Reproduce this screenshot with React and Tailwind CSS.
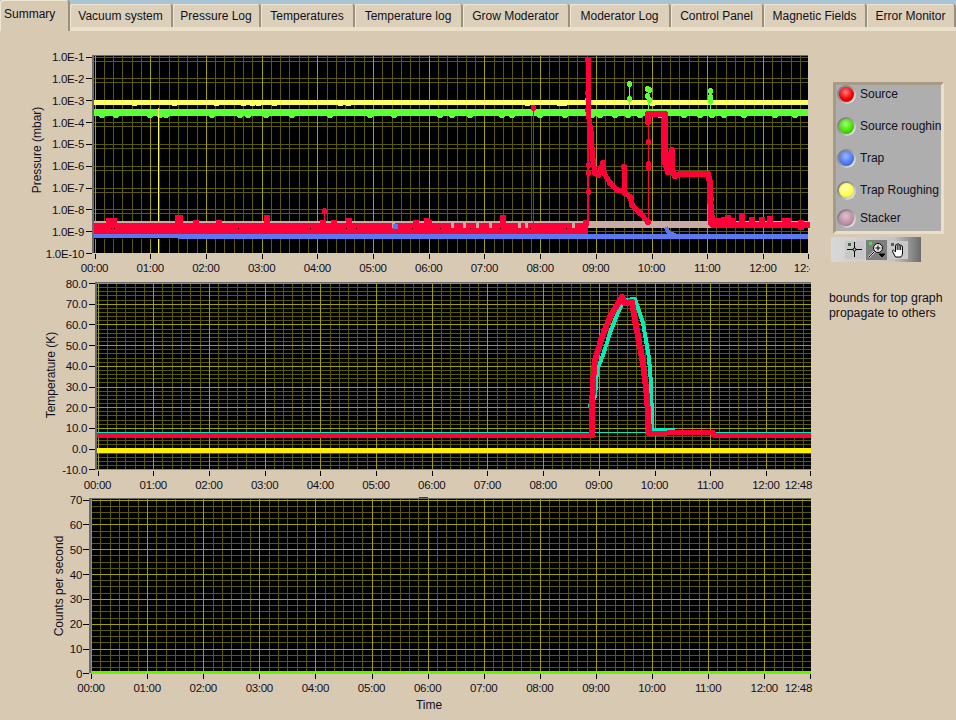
const tabs = [
  ['Vacuum system', 'w-[103px]'],
  ['Pressure Log', 'w-[88px]'],
  ['Temperatures', 'w-[94px]'],
  ['Temperature log', 'w-[108px]'],
  ['Grow Moderator', 'w-[107px]'],
  ['Moderator Log', 'w-[101px]'],
  ['Control Panel', 'w-[93px]'],
  ['Magnetic Fields', 'w-[103px]'],
  ['Error Monitor', 'w-[89px]'],
]

const legend = [
  ['Source', 'bg-[radial-gradient(circle_at_45%_35%,#ff7a7a,#f00000_55%,#a80000)]', 'h-[32px]'],
  ['Source roughing', 'bg-[radial-gradient(circle_at_45%_35%,#a0ff70,#44e000_55%,#2c9000)]', 'h-[32px]'],
  ['Trap', 'bg-[radial-gradient(circle_at_45%_35%,#9ab8ff,#4d78f0_55%,#3050a8)]', 'h-[32px]'],
  ['Trap Roughing', 'bg-[radial-gradient(circle_at_45%_35%,#ffffb0,#ffff50_55%,#b0b030)]', 'h-[28px]'],
  ['Stacker', 'bg-[radial-gradient(circle_at_45%_35%,#e0c0d0,#c090a8_55%,#806070)]', 'h-[22px]'],
]

const hours = ['00:00', '01:00', '02:00', '03:00', '04:00', '05:00', '06:00', '07:00', '08:00', '09:00', '10:00', '11:00', '12:00']

const MINOR = '#5a5a06'
const MAJOR = '#a0a000'
const RED = '#ff0038'
const GREEN = '#5cff38'
const TEAL = '#00eeb8'
const BLUE = '#5a78f0'
const tickText = 'fill-[#10101c] text-[11.5px] tracking-[-0.3px]'
const titleText = 'fill-[#10101c] text-[12px]'

const pts = (list) => list.map((p) => p.join(',')).join(' ')

// zoom crop coords back to page coords
const fromCrop = (list, ox, oy) => list.map(([x, y]) => [Math.round(ox + x / 3), Math.round(oy + y / 3)])

function Trace({ points, color, width, dot }) {
  return (
    <g shapeRendering="crispEdges">
      <polyline points={pts(points)} fill="none" stroke={color} strokeWidth={width} strokeLinejoin="round" />
      {dot && points.map(([x, y]) => <circle key={`${x}-${y}`} cx={x} cy={y} r={dot} fill={color} />)}
    </g>
  )
}

function Plot({ box, x0, step, yMajor, yMinor, yLabels, labelEnd, lastEnd, lastX, children }) {
  const { l, t, r, b } = box
  const xMajor = hours.map((_, i) => Math.round(x0 + i * step) + 0.5)
  // minor lines every ten minutes, worked out per hour so they never sit next to a major one
  const xMinor = []
  for (let i = 0; i < 13; i++) {
    for (let k = 1; k < 6; k++) {
      const x = Math.round(x0 + i * step + (k * step) / 6) + 0.5
      if (x < r) xMinor.push(x)
    }
  }
  return (
    <>
      <rect x={l} y={t} width={r - l} height={b - t} fill="#000" />
      <g shapeRendering="crispEdges" strokeWidth="1">
        {xMinor.map((x) => <line key={x} x1={x} x2={x} y1={t} y2={b} stroke={MINOR} />)}
        {yMinor.map((y) => <line key={y} x1={l} x2={r} y1={Math.round(y) + 0.5} y2={Math.round(y) + 0.5} stroke={MINOR} />)}
        {yMajor.map((y) => <line key={y} x1={l} x2={r} y1={Math.round(y) + 0.5} y2={Math.round(y) + 0.5} stroke={MAJOR} />)}
        {xMajor.map((x) => <line key={x} x1={x} x2={x} y1={t} y2={b} stroke={MAJOR} />)}
      </g>
      {children}
      <g shapeRendering="crispEdges">
        <rect x={l} y={t} width={r - l} height="1" fill="#6a6a6a" />
        <rect x={l - 1} y={t} width="2" height={b - t} fill="#6a6a6a" />
        {yLabels.map(([text, y]) => <rect key={text} x={l - 7} y={Math.round(y)} width="6" height="1" fill="#000" />)}
        {xMajor.map((x) => <rect key={x} x={x - 0.5} y={b + 1} width="1" height="5" fill="#000" />)}
        <rect x={Math.round(lastX)} y={b + 1} width="1" height="5" fill="#000" />
      </g>
      {yLabels.map(([text, y]) => (
        <text key={text} x={labelEnd} y={y + 4.5} textAnchor="end" className={tickText}>{text}</text>
      ))}
      {hours.map((h, i) => (
        <text key={h} x={x0 + i * step} y={b + 19} textAnchor="middle" className={tickText}>{h}</text>
      ))}
      <text x={lastEnd ? lastX + 2 : lastX} y={b + 19} textAnchor={lastEnd ? 'end' : 'middle'} className={tickText}>12:48</text>
    </>
  )
}

function PressureGraph() {
  const box = { l: 93, t: 55, r: 808, b: 253 }
  const decades = Array.from({ length: 10 }, (_, i) => 56.5 + i * 21.85)
  const labels = decades.map((y, i) => [`1.0E-${i + 1}`, y])
  const greenBumps = [102, 116, 150, 160, 166, 212, 240, 248, 266, 292, 330, 370, 394, 440, 452, 470, 502, 512, 540, 565, 592, 600, 615, 628, 640, 660, 684, 700, 712, 724, 744, 775, 795]
  const yellowBumps = [132, 172, 214, 241, 250, 256, 272, 338, 346, 525, 557, 562, 650]
  const redBumps = [[109, 218], [112, 218], [114, 218], [178, 215], [180, 215], [196, 220], [219, 220], [267, 215], [323, 220], [334, 220], [349, 218], [416, 220], [427, 218], [429, 220], [503, 215], [586, 220]]
  const gaps = [392, 451, 463, 476, 489, 518, 525, 572]
  const dots = [111, 114, 238, 310, 346, 356, 396, 412, 440, 470, 500, 530, 566]
  const mainTrace = fromCrop([[85, 30], [85, 130], [85, 180], [90, 230], [92, 250], [98, 330], [105, 370], [115, 375], [128, 340], [133, 370], [150, 400], [170, 420], [192, 420], [192, 350], [195, 430], [210, 440], [215, 465], [240, 490], [265, 515]], 560, 50)
  const secondTrace = fromCrop([[265, 215], [265, 193], [315, 193], [315, 340], [325, 365], [335, 300], [335, 360], [345, 378], [360, 372], [445, 372], [450, 400], [452, 520], [460, 525], [744, 525]], 560, 50)
  const rightBumps = [[712, 215], [718, 218], [724, 217], [728, 215], [733, 218], [742, 214], [752, 217], [762, 217], [770, 216], [785, 218], [788, 218], [801, 220]]

  return (
    <svg width="810" height="237" viewBox="0 40 810 237">
      <Plot box={box} x0={94.5} step={55.7} yMajor={[]} yMinor={decades.flatMap((y) => [y, y + 4]).filter((y) => y < 253)} yLabels={labels} labelEnd={84} lastX={807.5}>
        <g shapeRendering="crispEdges">
          <rect x="93" y="100" width="715" height="5" fill="#ffff66" />
          {yellowBumps.map((x) => <rect key={x} x={x} y="105" width="5" height="1" fill="#ffff66" />)}
          <rect x="93" y="109" width="715" height="7" fill={GREEN} />
          {greenBumps.map((x) => <circle key={x} cx={x} cy="113.5" r="4.5" fill={GREEN} />)}
          <rect x="158" y="108" width="1" height="145" fill="#ffff66" />
          <rect x="629" y="84" width="1" height="25" fill={GREEN} />
          <rect x="648" y="92" width="1" height="17" fill={GREEN} />
          <rect x="710" y="91" width="1" height="18" fill={GREEN} />
          <rect x="94" y="221" width="714" height="7" fill="#c8aca4" />
          <rect x="94" y="234" width="714" height="5" fill={BLUE} />
          <rect x="94" y="238" width="84" height="1" fill="#000" />
          <rect x="94" y="223" width="494" height="11" fill={RED} />
          {gaps.map((x) => <rect key={x} x={x} y="223" width="3" height="5" fill="#c8aca4" />)}
          {dots.map((x) => <rect key={x} x={x} y="228" width="1" height="1" fill="#000" />)}
          {redBumps.map(([x, y]) => <circle key={x} cx={x} cy={y + 3} r="3.5" fill={RED} />)}
          {redBumps.map(([x, y]) => <rect key={x} x={x - 3} y={y + 3} width="6" height={220 - y} fill={RED} />)}
          <rect x="393" y="224" width="5" height="5" fill={BLUE} />
          <rect x="533" y="108" width="1" height="115" fill={RED} />
          <rect x="324" y="209" width="1" height="14" fill={RED} />
          <rect x="588" y="60" width="1" height="165" fill={RED} />
          <rect x="648" y="115" width="1" height="107" fill={RED} />
        </g>
        {[[629, 84], [629, 99], [647, 89], [649, 90], [647, 96], [649, 100], [710, 91], [710, 97], [710, 101], [587, 100]].map(([x, y]) => (
          <circle key={`${x}-${y}`} cx={x + 0.5} cy={y} r="3" fill={GREEN} shapeRendering="crispEdges" />
        ))}
        <Trace points={fromCrop([[318, 530], [325, 545], [335, 553], [350, 558]], 560, 50)} color={BLUE} width={4} />
        <Trace points={mainTrace} color={RED} width={5} dot={3} />
        <Trace points={secondTrace} color={RED} width={6} dot={3} />
        {rightBumps.map(([x, y]) => <circle key={x} cx={x} cy={y + 3} r="3.5" fill={RED} shapeRendering="crispEdges" />)}
        {rightBumps.map(([x, y]) => <rect key={x} x={x - 3} y={y + 3} width="6" height="7" fill={RED} shapeRendering="crispEdges" />)}
        {[[533, 108], [324, 211], [588, 165], [588, 173], [588, 192], [648, 142], [648, 164], [648, 168], [711, 199], [711, 209]].map(([x, y]) => (
          <circle key={`${x}-${y}`} cx={x + 0.5} cy={y} r="3" fill={RED} shapeRendering="crispEdges" />
        ))}
      </Plot>
      <text transform="translate(41 150) rotate(-90)" textAnchor="middle" className={titleText}>Pressure (mbar)</text>
    </svg>
  )
}

function TemperatureGraph() {
  const box = { l: 96, t: 282, r: 811, b: 470 }
  const step = 20.7
  const labels = Array.from({ length: 10 }, (_, i) => [`${(80 - i * 10).toFixed(1)}`, 283 + i * step])
  const minor = labels.flatMap(([, y]) => [1, 2, 3, 4].map((k) => y + (k * step) / 5)).filter((y) => y < 470)
  const peakTrace = fromCrop([[95, 465], [95, 390], [100, 300], [105, 240], [125, 170], [150, 110], [185, 50], [195, 70], [215, 65], [235, 170], [250, 250], [262, 350], [268, 460]], 560, 280)
  const tailTrace = fromCrop([[268, 460], [320, 460], [460, 457], [460, 465], [753, 465]], 560, 280)
  const tealTrace = fromCrop([[88, 382], [105, 350], [112, 270], [128, 225], [153, 150], [178, 90], [195, 60], [225, 57], [248, 130], [268, 235], [272, 310], [275, 420], [277, 451], [340, 451], [340, 453]], 560, 280)

  return (
    <svg width="820" height="216" viewBox="0 277 820 216">
      <Plot box={box} x0={97.5} step={55.7} yMajor={labels.map((l) => l[1])} yMinor={minor} yLabels={labels} labelEnd={87} lastX={810} lastEnd>
        <g shapeRendering="crispEdges">
          <rect x="96" y="432" width="715" height="1" fill={TEAL} />
          <rect x="96" y="433" width="496" height="5" fill={RED} />
          <rect x="96" y="448" width="715" height="5" fill="#ffee08" />
        </g>
        <Trace points={tealTrace} color={TEAL} width={4} />
        <Trace points={peakTrace} color={RED} width={6} dot={3} />
        <Trace points={tailTrace} color={RED} width={5} />
        <rect x="449" y="282" width="9" height="1" fill="#404040" shapeRendering="crispEdges" />
      </Plot>
      <text transform="translate(55 375) rotate(-90)" textAnchor="middle" className={titleText}>Temperature (K)</text>
    </svg>
  )
}

function CountsGraph() {
  const box = { l: 90, t: 498, r: 811, b: 673 }
  const step = 24.85
  const labels = Array.from({ length: 8 }, (_, i) => [`${70 - i * 10}`, 499.5 + i * step])
  const minor = labels.flatMap(([, y]) => [1, 2, 3].map((k) => y + (k * step) / 4)).filter((y) => y < 673)

  return (
    <svg width="820" height="227" viewBox="0 493 820 227">
      <Plot box={box} x0={91} step={56.1} yMajor={labels.map((l) => l[1])} yMinor={minor} yLabels={labels} labelEnd={82} lastX={810} lastEnd>
        <rect x="90" y="671" width="721" height="3" fill="#66f500" shapeRendering="crispEdges" />
        <rect x="419" y="497" width="9" height="2" fill="#404040" shapeRendering="crispEdges" />
      </Plot>
      <text transform="translate(63 586) rotate(-90)" textAnchor="middle" className={titleText}>Counts per second</text>
      <text x="429" y="709" textAnchor="middle" className={titleText}>Time</text>
    </svg>
  )
}

function Led({ color }) {
  return (
    <span className="flex h-[19px] w-[19px] shrink-0 items-center justify-center rounded-full bg-[linear-gradient(135deg,#707070,#a0a0a0_50%,#ffffff)]">
      <span className={`h-[15px] w-[15px] rounded-full ${color}`} />
    </span>
  )
}

function ToolPalette() {
  return (
    <div className="ml-[2px] mt-[3px] flex h-[25px] w-[90px] items-center gap-[2px] bg-[linear-gradient(90deg,#d8d8d8,#c4c4c4_70%,#6c6c6c)] pl-[14px]">
      <span className="relative flex h-[18px] w-[19px] items-center justify-center bg-[#c8c8c8]">
        <span className="absolute left-[3px] top-[2px] h-[3px] w-[3px] bg-[#3c7040]" />
        <svg width="17" height="17" viewBox="0 0 17 17" fill="none" stroke="#000">
          <path d="M8.5 1v15M1 8.5h15" />
          <circle cx="8.5" cy="8.5" r="1.5" fill="#c8c8c8" />
        </svg>
      </span>
      <span className="relative flex h-[20px] w-[21px] items-center justify-center bg-[#7e7e7e]">
        <span className="absolute left-[3px] top-[2px] h-[3px] w-[3px] bg-[#30f030]" />
        <svg width="19" height="18" viewBox="0 0 19 18" fill="none" stroke="#000">
          <circle cx="11" cy="7" r="4.5" fill="#e8e8e8" />
          <path d="M8.5 7h5M11 4.5v5" />
          <path d="M7.5 10.5L2 16" strokeWidth="2" stroke="#e8e8e8" />
          <path d="M7.5 10.5L2 16" strokeWidth="1" />
          <path d="M12 13h6l-3 3z" fill="#000" />
        </svg>
      </span>
      <span className="relative flex h-[18px] w-[19px] items-center justify-center bg-[#c8c8c8]">
        <span className="absolute left-[2px] top-[2px] h-[3px] w-[3px] bg-[#3c7040]" />
        <svg width="16" height="16" viewBox="0 0 16 16" fill="#fff" stroke="#000" strokeWidth="1">
          <path d="M4.5 15L1.5 9.5c-.6-1.2.8-2 1.6-1L4.5 10V3.5c0-1.2 1.7-1.2 1.7 0V2.5c0-1.2 1.8-1.2 1.8 0v1c0-1.2 1.7-1.2 1.7 0v1c0-1.1 1.8-1.1 1.8 0V11c0 2-1 3-1.5 4z" />
          <path d="M6.2 3.5V8M8 3.5V8M9.7 4.5V8" />
        </svg>
      </span>
    </div>
  )
}

export default function App() {
  return (
    <div className="h-[720px] w-[956px] overflow-hidden bg-[#d8c9b2] font-['Liberation_Sans',sans-serif] text-[12px] text-[#10101c]">
      {/* Tabs */}
      <div className="flex h-[31px] items-start bg-[linear-gradient(#a8c4d4_0,#a8c4d4_4px,#d8c9b2_4px,#d8c9b2_27px,#eadfc9_27px,#eadfc9_100%)]">
        <div className="flex h-[31px] w-[70px] shrink-0 items-center rounded-t-[3px] border-r-2 border-r-[#9a9080] bg-[#d8c9b2] pb-[5px] pl-[4px] pt-[2px] shadow-[inset_1px_1px_0_#f0e6d4]">
          Summary
        </div>
        {tabs.map(([name, width]) => (
          <div key={name} className={`mt-[4px] flex h-[23px] shrink-0 items-center justify-center rounded-t-[3px] border-r-2 border-r-[#9a9080] bg-[#ddd0ba] shadow-[inset_1px_1px_0_#f0e6d4] ${width}`}>
            {name}
          </div>
        ))}
      </div>

      <div className="flex pt-[9px]">
        {/* Graphs */}
        <div className="w-[829px] shrink-0">
          <PressureGraph />
          <TemperatureGraph />
          <CountsGraph />
        </div>

        {/* Side panel */}
        <div className="pt-[42px]">
          <div className="ml-[4px] w-[111px] border-[3px] border-b-[#ecdfc8] border-l-[#a89a84] border-r-[#ecdfc8] border-t-[#a89a84] bg-[#aeaeae] pl-[1px]">
            {legend.map(([name, color, height]) => (
              <div key={name} className={`flex items-start gap-[4px] overflow-hidden whitespace-nowrap ${height}`}>
                <Led color={color} />
                <span>{name}</span>
              </div>
            ))}
          </div>
          <ToolPalette />
          <p className="mt-[29px] text-[12.3px] leading-[15px]">
            bounds for top graph
            <br />
            propagate to others
          </p>
        </div>
      </div>
    </div>
  )
}
